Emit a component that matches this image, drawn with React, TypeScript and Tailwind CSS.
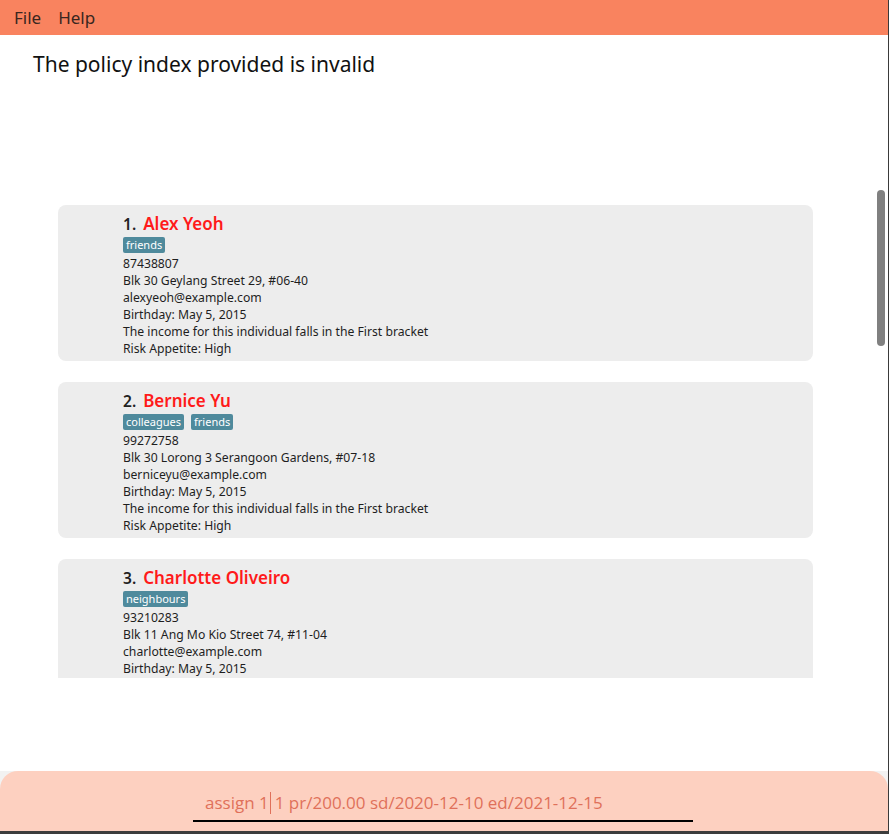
import React from 'react';

const people = [
  {
    id: 1,
    name: 'Alex Yeoh',
    tags: ['friends'],
    phone: '87438807',
    address: 'Blk 30 Geylang Street 29, #06-40',
    email: 'alexyeoh@example.com',
  },
  {
    id: 2,
    name: 'Bernice Yu',
    tags: ['colleagues', 'friends'],
    phone: '99272758',
    address: 'Blk 30 Lorong 3 Serangoon Gardens, #07-18',
    email: 'berniceyu@example.com',
  },
  {
    id: 3,
    name: 'Charlotte Oliveiro',
    tags: ['neighbours'],
    phone: '93210283',
    address: 'Blk 11 Ang Mo Kio Street 74, #11-04',
    email: 'charlotte@example.com',
  },
];

const PersonCard = ({ person }: { person: (typeof people)[number] }) => (
  <div className="w-[755px] ml-[58px] rounded-lg bg-[#ededed] pl-[65px] pt-[8px] pb-[4px] text-[12.2px] leading-[17px] text-[#1e1e1e]">
    <div className="flex items-baseline h-[24px] leading-[22px]">
      <span className="text-[15.5px] font-semibold text-[#222] mr-[7px]">{person.id}.</span>
      <span className="text-[17px] font-semibold text-[#ff1a1a]">{person.name}</span>
    </div>
    <div className="flex gap-[7px] mb-[2px]">
      {person.tags.map((t) => (
        <span key={t} className="bg-[#4f8a9c] text-white text-[11px] leading-[16px] px-[3px] rounded-[2px]">
          {t}
        </span>
      ))}
    </div>
    <div>{person.phone}</div>
    <div>{person.address}</div>
    <div>{person.email}</div>
    <div>Birthday: May 5, 2015</div>
    <div>The income for this individual falls in the First bracket</div>
    <div>Risk Appetite: High</div>
  </div>
);

export default function App() {
  return (
    <div className="w-[889px] h-[834px] flex flex-col bg-white border-r border-[#3a3a3a] overflow-hidden" style={{ fontFamily: '"Noto Sans", "Open Sans", sans-serif' }}>
      {/* menu bar */}
      <div className="h-[35px] bg-[#f9835f] flex items-center gap-[17px] pl-[14px] text-[17px] text-[#3a2620]">
        <span>File</span>
        <span>Help</span>
      </div>

      {/* result display */}
      <div className="h-[135px] pl-[33px] pt-[14px] text-[21px] text-[#111]">
        The policy index provided is invalid
      </div>

      {/* list */}
      <div className="relative h-[508px] overflow-hidden">
        <div className="flex flex-col gap-[21px] pt-[35px]">
          {people.map((p) => (
            <PersonCard key={p.id} person={p} />
          ))}
        </div>
        <div className="absolute right-[3px] top-[20px] w-[8px] h-[156px] rounded-full bg-[#808080]" />
      </div>

      {/* spacer */}
      <div className="h-[93px]" />

      {/* command box */}
      <div className="bg-[#f2f2f2] flex-1 flex flex-col">
        <div className="flex-1 bg-[#fdd0c0] rounded-t-[18px] relative">
          <div className="absolute left-[193px] top-[15px] w-[500px] h-[36px] border-b-2 border-black pl-[12px] flex items-center text-[17px] text-[#e0705a]" style={{ fontFamily: '"Open Sans", sans-serif' }}>
            <span>assign 1</span>
            <span className="w-[1px] h-[22px] bg-[#e0705a] ml-[1px] mr-[4px]" />
            <span>1 pr/200.00 sd/2020-12-10 ed/2021-12-15</span>
          </div>
        </div>
        <div className="h-[3px] bg-[#3c3c3c]" />
      </div>
    </div>
  );
}
